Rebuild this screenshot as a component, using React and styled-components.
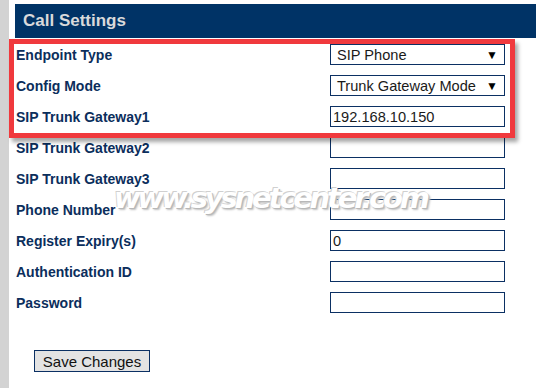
import React from "react";
import styled, { createGlobalStyle } from "styled-components";

const Global = createGlobalStyle`
  html, body { margin: 0; padding: 0; background: #fff; }
  body { font-family: "Liberation Sans", Arial, sans-serif; width: 536px; height: 388px; overflow: hidden; }
`;

const Page = styled.div`
  position: relative;
  display: flex;
  width: 536px;
  height: 388px;
`;

const Strip = styled.div`
  width: 9px;
  flex: none;
  background: #d3d3d3;
`;

const Main = styled.div`
  flex: 1;
  padding: 4px 0 0 6px;
  display: flex;
  flex-direction: column;
`;

const Header = styled.div`
  height: 34px;
  background: #003366;
  display: flex;
  align-items: center;
  padding-left: 8px;
  color: #d9dadb;
  font-weight: bold;
  font-size: 17px;
`;

const Form = styled.div`
  margin-top: 1px;
  display: grid;
  grid-template-columns: 315px 175px;
  grid-auto-rows: 31px;
  align-items: center;
`;

const Label = styled.div`
  padding-left: 1px;
  color: #0b2e5c;
  font-weight: bold;
  font-size: 14px;
`;

const Field = styled.div`
  box-sizing: border-box;
  height: 21px;
  border: 1px solid #0b3063;
  background: #fff;
  display: flex;
  align-items: center;
  justify-content: space-between;
  padding: 0 6px 0 ${(p) => (p.$select ? 6 : 2)}px;
  color: #1a1a1a;
  font-size: 14.6px;
`;

const Arrow = styled.span`
  font-size: 12px;
  color: #000;
`;

const Button = styled.button`
  margin: 32px 0 0 19px;
  align-self: flex-start;
  width: 116px;
  height: 22px;
  box-sizing: border-box;
  border: 1px solid #0b3063;
  background: #e3e3e3;
  color: #111;
  font-family: "Liberation Sans", Arial, sans-serif;
  font-size: 15px;
  padding: 0;
`;

const Highlight = styled.div`
  position: absolute;
  left: 9px;
  top: 39px;
  width: 506px;
  height: 99px;
  box-sizing: border-box;
  border: 5px solid #f0393d;
  box-shadow: 3px 4px 4px rgba(0, 0, 0, 0.35);
  pointer-events: none;
`;

const Watermark = styled.div`
  position: absolute;
  left: 114px;
  top: 181px;
  font-family: "DejaVu Sans", sans-serif;
  font-weight: bold;
  font-style: italic;
  font-size: 29px;
  letter-spacing: -3.2px;
  color: #fff;
  text-shadow: -1px -1px 0 #d0d0d0, 1px 1px 0 #b8b8b8, 2px 2px 2px #c0c0c0;
  pointer-events: none;
  white-space: nowrap;
`;

const rows = [
  ["Endpoint Type", "SIP Phone", true],
  ["Config Mode", "Trunk Gateway Mode", true],
  ["SIP Trunk Gateway1", "192.168.10.150"],
  ["SIP Trunk Gateway2", ""],
  ["SIP Trunk Gateway3", ""],
  ["Phone Number", ""],
  ["Register Expiry(s)", "0"],
  ["Authentication ID", ""],
  ["Password", ""],
];

export default function App() {
  return (
    <Page>
      <Global />
      <Strip />
      <Main>
        <Header>Call Settings</Header>
        <Form>
          {rows.map(([label, value, select]) => (
            <React.Fragment key={label}>
              <Label>{label}</Label>
              <Field $select={select}>
                <span>{value}</span>
                {select && <Arrow>▼</Arrow>}
              </Field>
            </React.Fragment>
          ))}
        </Form>
        <Button>Save Changes</Button>
      </Main>
      <Watermark>www.sysnetcenter.com</Watermark>
      <Highlight />
    </Page>
  );
}
